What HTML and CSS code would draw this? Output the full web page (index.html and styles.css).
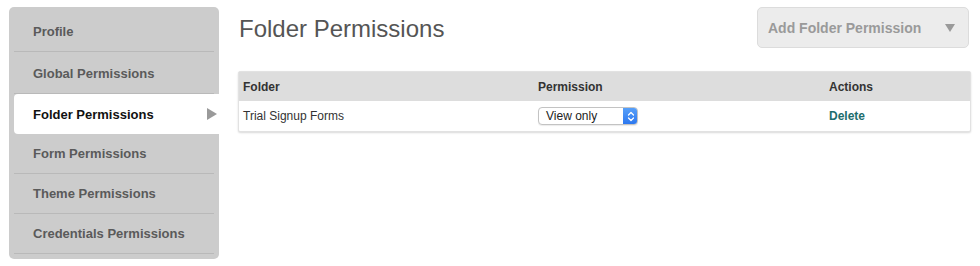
FILE: index.html
```html
<!DOCTYPE html>
<html>
<head>
<meta charset="utf-8">
<link rel="stylesheet" href="styles.css">
</head>
<body>
<div class="page">
  <nav class="sidebar">
    <div class="nav-item">Profile</div>
    <div class="nav-item">Global Permissions</div>
    <div class="nav-item active">Folder Permissions<span class="arrow"></span></div>
    <div class="nav-item">Form Permissions</div>
    <div class="nav-item">Theme Permissions</div>
    <div class="nav-item">Credentials Permissions</div>
  </nav>
  <main class="main">
    <div class="top">
      <h1 class="title">Folder Permissions</h1>
      <div class="add-btn">Add Folder Permission<span class="caret"></span></div>
    </div>
    <div class="table">
      <div class="row head">
        <div class="cell c1">Folder</div>
        <div class="cell c2">Permission</div>
        <div class="cell c3">Actions</div>
      </div>
      <div class="row body">
        <div class="cell c1">Trial Signup Forms</div>
        <div class="cell c2">
          <div class="select">
            <span class="select-text">View only</span>
            <span class="stepper">
              <svg width="8" height="11" viewBox="0 0 8 11"><path d="M1.5 4 L4 1.5 L6.5 4 M1.5 7 L4 9.5 L6.5 7" fill="none" stroke="#fff" stroke-width="1.3" stroke-linecap="round" stroke-linejoin="round"/></svg>
            </span>
          </div>
        </div>
        <div class="cell c3"><span class="delete">Delete</span></div>
      </div>
    </div>
  </main>
</div>
</body>
</html>
```

FILE: styles.css
```css
html, body {
  margin: 0;
  padding: 0;
  background: #fff;
}
body {
  font-family: "Liberation Sans", Arial, sans-serif;
  color: #333;
}
.page {
  display: flex;
  align-items: flex-start;
  padding: 7px 11px 0 9px;
  gap: 19px;
}
.sidebar {
  width: 210px;
  flex: none;
  background: #cccccc;
  border-radius: 5px;
  padding: 5px 0 5px 5px;
  box-sizing: border-box;
  height: 252px;
}
.nav-item {
  height: 40px;
  box-sizing: border-box;
  border-bottom: 1px solid #b9b9b9;
  display: flex;
  align-items: center;
  padding-left: 19px;
  margin-right: 5px;
  font-size: 13px;
  font-weight: bold;
  color: #5a5a5a;
  position: relative;
}
.nav-item:nth-child(2) {
  height: 42px;
  padding-top: 2px;
}
.nav-item.active {
  background: #fff;
  color: #111;
  border-bottom: none;
  margin-right: 0;
  border-radius: 4px 0 0 4px;
}
.arrow {
  position: absolute;
  right: 2px;
  top: 14px;
  width: 0;
  height: 0;
  border-top: 6px solid transparent;
  border-bottom: 6px solid transparent;
  border-left: 10px solid #9a9a9a;
}
.main {
  flex: 1;
  min-width: 0;
}
.top {
  display: flex;
  justify-content: space-between;
  align-items: flex-start;
  height: 64px;
}
.title {
  margin: 8px 0 0 1px;
  font-size: 24px;
  line-height: 28px;
  font-weight: normal;
  color: #555;
}
.add-btn {
  width: 212px;
  height: 41px;
  box-sizing: border-box;
  background: #ececec;
  border: 1px solid #dcdcdc;
  border-radius: 5px;
  display: flex;
  align-items: center;
  justify-content: space-between;
  padding: 0 13px 0 10px;
  font-size: 14px;
  font-weight: bold;
  color: #9a9a9a;
  margin-right: 0;
}
.caret {
  width: 0;
  height: 0;
  border-left: 5px solid transparent;
  border-right: 5px solid transparent;
  border-top: 8px solid #9a9a9a;
}
.table {
  width: 731px;
  border: 1px solid #e2e2e2;
  border-radius: 2px;
  box-shadow: 0 1px 2px rgba(0,0,0,0.15);
  background: #fff;
}
.row {
  display: flex;
  align-items: center;
}
.row.head {
  background: #dddddd;
  height: 29px;
}
.row.body {
  height: 30px;
}
.cell {
  box-sizing: border-box;
  padding-left: 4px;
  font-size: 12px;
}
.head .cell {
  font-weight: bold;
  color: #333;
}
.c1 { width: 295px; }
.c2 { width: 291px; }
.c3 { width: 145px; }
.body .c1 { color: #333; }
.delete {
  font-weight: bold;
  color: #1d6d6d;
}
.select {
  width: 100px;
  height: 18px;
  box-sizing: border-box;
  border: 1px solid #c3c3c3;
  border-radius: 4px;
  background: #fff;
  display: flex;
  align-items: center;
  justify-content: space-between;
  box-shadow: 0 1px 1px rgba(0,0,0,0.08);
  overflow: hidden;
}
.select-text {
  padding-left: 7px;
  font-size: 12px;
  color: #222;
}
.stepper {
  width: 15px;
  height: 18px;
  margin-right: -1px;
  background: linear-gradient(#5aa2fa, #2a75ef);
  border-radius: 0 4px 4px 0;
  display: flex;
  align-items: center;
  justify-content: center;
}
```
